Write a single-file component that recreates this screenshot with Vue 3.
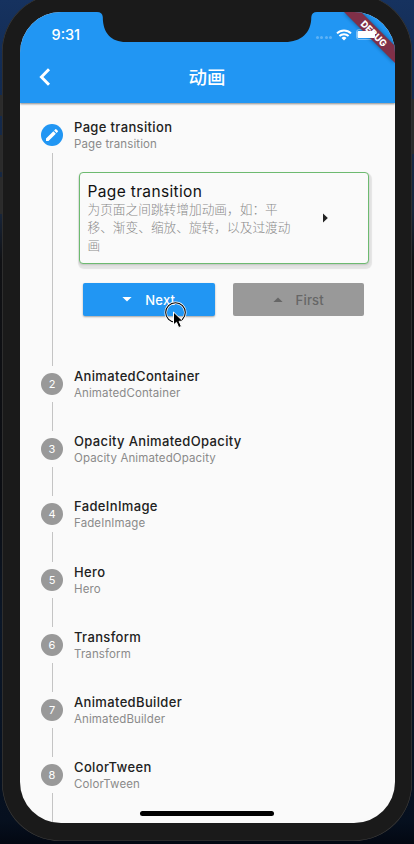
<script setup>
const steps = [
  'Page transition',
  'AnimatedContainer',
  'Opacity AnimatedOpacity',
  'FadeInImage',
  'Hero',
  'Transform',
  'AnimatedBuilder',
  'ColorTween',
]
</script>

<template>
  <div class="desktop">
    <span class="side left"></span>
    <span class="side right"></span>
    <div class="phone">
      <div class="screen">
        <header class="top">
          <div class="status">
            <span class="time">9:31</span>
            <div class="indicators">
              <span class="dots"><i v-for="n in 4" :key="n"></i></span>
              <svg class="wifi" width="16" height="12" viewBox="0 0 16 12">
                <path d="M1 4.4a10 10 0 0 1 14 0M3.4 7a6.6 6.6 0 0 1 9.2 0" fill="none" stroke="#fff" stroke-width="2" />
                <path d="M8 11.4 5.5 8.9a3.6 3.6 0 0 1 5 0z" fill="#fff" />
              </svg>
              <span class="battery"></span>
            </div>
          </div>
          <div class="appbar">
            <svg class="back" width="12" height="18" viewBox="0 0 12 18">
              <path d="M10 1.2 2.4 9l7.6 7.8" fill="none" stroke="#fff" stroke-width="2.9" />
            </svg>
            <h1>动画</h1>
            <span class="spacer"></span>
          </div>
        </header>

        <main>
          <section v-for="(name, i) in steps" :key="name" class="step" :class="{ first: i === 0 }">
            <div class="rail">
              <span class="badge" :class="{ active: i === 0 }">
                <svg v-if="i === 0" width="16" height="16" viewBox="0 0 24 24">
                  <path d="M3 17.25V21h3.75L17.81 9.94l-3.75-3.75L3 17.25zM20.71 7.04a1 1 0 0 0 0-1.41l-2.34-2.34a1 1 0 0 0-1.41 0l-1.83 1.83 3.75 3.75 1.83-1.83z" fill="#fff" />
                </svg>
                <template v-else>{{ i + 1 }}</template>
              </span>
              <span class="line"></span>
            </div>
            <div class="content">
              <div class="title">{{ name }}</div>
              <div class="subtitle">{{ name }}</div>
              <template v-if="i === 0">
                <div class="card">
                  <div class="copy">
                    <div class="card-title">Page transition</div>
                    <p>为页面之间跳转增加动画，如：平移、渐变、缩放、旋转，以及过渡动画</p>
                  </div>
                  <svg width="5" height="10" viewBox="0 0 5 10"><path d="M0 0.5 4.8 5 0 9.5z" fill="#222" /></svg>
                </div>
                <div class="actions">
                  <button class="next">
                    <svg width="10" height="5" viewBox="0 0 10 5"><path d="M0.4 0h9.2L5 4.6z" fill="currentColor" /></svg>
                    <span>Next</span>
                  </button>
                  <button class="prev">
                    <svg width="10" height="5" viewBox="0 0 10 5"><path d="M0.4 5h9.2L5 0.4z" fill="currentColor" /></svg>
                    <span>First</span>
                  </button>
                </div>
              </template>
            </div>
          </section>
        </main>

        <svg class="ribbon" width="60" height="60" viewBox="0 0 60 60">
          <defs>
            <filter id="soft" x="-20%" y="-20%" width="140%" height="140%"><feGaussianBlur stdDeviation="2.2" /></filter>
          </defs>
          <path d="M9 0H26L60 34V51z" fill="#000" opacity=".45" filter="url(#soft)" />
          <path d="M9 0H26L60 34V51z" fill="#803048" />
          <rect x="22.500" y="19" width="17.500" height="7" rx="1" fill="#fff" />
          <text x="39" y="25" transform="rotate(45 39 21.5)" text-anchor="middle">DEBUG</text>
        </svg>
        <span class="home"></span>
      </div>
      <svg class="notch" width="220" height="31" viewBox="0 0 220 31">
        <path d="M0 0V1Q5.300 1 5.800 6C5.800 22 14 31 29 31H188C204 31 214.300 22 214.300 6Q214.800 1 220 1V0z" fill="#1a1a1a" />
      </svg>
    </div>
    <svg class="pointer" width="24" height="30" viewBox="0 0 24 30">
      <circle cx="11.500" cy="11.500" r="9.800" fill="none" stroke="#fff" stroke-width="2.400" />
      <circle cx="11.500" cy="11.500" r="9.800" fill="none" stroke="#000" stroke-width="1.100" />
      <path d="M9.500 11V24l3-2.700 2.200 5.300 2.700-1.200-2.300-5.100h4z" fill="#000" stroke="#fff" stroke-width="1" />
    </svg>
  </div>
</template>

<style>
body {
  overflow: hidden;
}
</style>

<style scoped>
* {
  box-sizing: border-box;
}
.desktop {
  position: relative;
  width: 414px;
  height: 844px;
  overflow: hidden;
  padding: 0 2px;
  background: linear-gradient(#16325f 0, #122b52 80px, #18263c 210px, #101114 260px, #0b0d12 500px, #0b1728 620px, #06101f 820px, #030812);
  font-family: Inter, "Noto Sans CJK SC", sans-serif;
}
.side {
  position: absolute;
  top: 0;
  width: 3px;
  height: 220px;
}
.side.left {
  left: 0;
  background: linear-gradient(transparent 95px, #2b2b2b 95px 116px, transparent 116px 135px, #2b2b2b 135px 172px, transparent 172px 177px, #2b2b2b 177px 214px, transparent 214px);
}
.side.right {
  right: 0;
  background: linear-gradient(transparent 99px, #2b2b2b 99px 154px, transparent 154px);
}
.phone {
  position: relative;
  width: 410px;
  height: 847px;
  margin-top: -6px;
  padding: 18px 17.500px;
  border-radius: 58px;
  background: #1a1a1a;
  box-shadow: inset 0 0 0 0.600px #3c3c3c;
}
.screen {
  position: relative;
  display: flex;
  flex-direction: column;
  height: 811px;
  overflow: hidden;
  border-radius: 41px;
  background: #fafafa;
}
.notch {
  position: absolute;
  left: 94.500px;
  top: 17px;
}
.top {
  flex: none;
  height: 90.500px;
  background: #2196f3;
  box-shadow: 0 1px 2px rgba(0, 0, 0, 0.45);
  color: #fff;
}
.status {
  display: flex;
  justify-content: space-between;
  height: 40px;
  padding: 0 16.500px 0 32px;
}
.time {
  padding-top: 13px;
  font-size: 14.500px;
  font-weight: 500;
  line-height: 19px;
}
.indicators {
  display: flex;
  align-items: center;
  padding-top: 5px;
}
.dots {
  display: flex;
  gap: 1.500px;
  margin: 6px 4px 0 0;
}
.dots i {
  width: 3px;
  height: 3px;
  border-radius: 50%;
  background: rgba(255, 255, 255, 0.28);
}
.battery {
  width: 22px;
  height: 11px;
  margin-left: 4px;
  border: 1px solid rgba(255, 255, 255, 0.4);
  border-radius: 3px;
}
.appbar {
  display: flex;
  align-items: center;
  justify-content: space-between;
  height: 50px;
  padding: 0 19px;
}
.spacer {
  width: 12px;
}
h1 {
  margin: 0;
  font-size: 18.500px;
  font-weight: 500;
  line-height: 26px;
}
main {
  padding: 14.500px 26px 0 21.500px;
}
.step {
  display: flex;
  gap: 11px;
  height: 65.200px;
}
.step.first {
  height: 249px;
}
.rail {
  display: flex;
  flex-direction: column;
  align-items: center;
  width: 22px;
  padding-top: 7px;
}
.badge {
  display: flex;
  flex: none;
  align-items: center;
  justify-content: center;
  width: 22px;
  height: 22px;
  margin-bottom: 7px;
  border-radius: 50%;
  background: #999;
  color: #fff;
  font-size: 11px;
  line-height: 22px;
}
.badge.active {
  background: #2196f3;
}
.line {
  flex: 1;
  width: 1px;
  background: #c4c4c4;
}
.content {
  flex: 1;
  min-width: 0;
}
.title {
  color: #212121;
  font-size: 13px;
  font-weight: 500;
  letter-spacing: 0.350px;
  line-height: 20px;
  white-space: nowrap;
}
.subtitle {
  color: #8a8a8a;
  font-size: 11.500px;
  letter-spacing: 0.120px;
  line-height: 14px;
  white-space: nowrap;
}
.card {
  display: flex;
  align-items: center;
  justify-content: space-between;
  width: 290px;
  height: 92px;
  margin: 21px 0 0 4.500px;
  padding: 0 40px 0 8px;
  border: 1px solid #6dba70;
  border-radius: 4px;
  background: #fafafa;
  box-shadow: 1px 3px 1px 2px rgba(0, 0, 0, 0.09), 0 1px 2px rgba(0, 0, 0, 0.14);
}
.copy {
  width: 206px;
}
.card-title {
  color: #111;
  font-size: 15.500px;
  letter-spacing: 0.350px;
  line-height: 19px;
}
p {
  margin: 0;
  color: #8a8a8a;
  font-size: 12.700px;
  font-weight: 300;
  line-height: 18px;
}
.actions {
  display: flex;
  gap: 18px;
  margin: 19px 0 0 9px;
}
button {
  display: flex;
  align-items: center;
  justify-content: center;
  gap: 13px;
  width: 131.500px;
  height: 33px;
  padding: 0;
  border: 0;
  border-radius: 2px;
  font: 500 13px Inter, sans-serif;
  letter-spacing: 0.200px;
}
.next {
  background: #2196f3;
  box-shadow: 0 1px 2px rgba(0, 0, 0, 0.35);
  color: #fff;
}
.prev {
  background: #999;
  color: #666;
}
.ribbon {
  position: absolute;
  right: 0;
  top: 0;
}
.ribbon text {
  fill: #fff;
  font: 800 9.300px Inter, sans-serif;
}
.home {
  position: absolute;
  left: 120.500px;
  bottom: 7px;
  width: 134px;
  height: 5px;
  border-radius: 3px;
  background: #000;
}
.pointer {
  position: absolute;
  left: 164px;
  top: 301px;
}
</style>
